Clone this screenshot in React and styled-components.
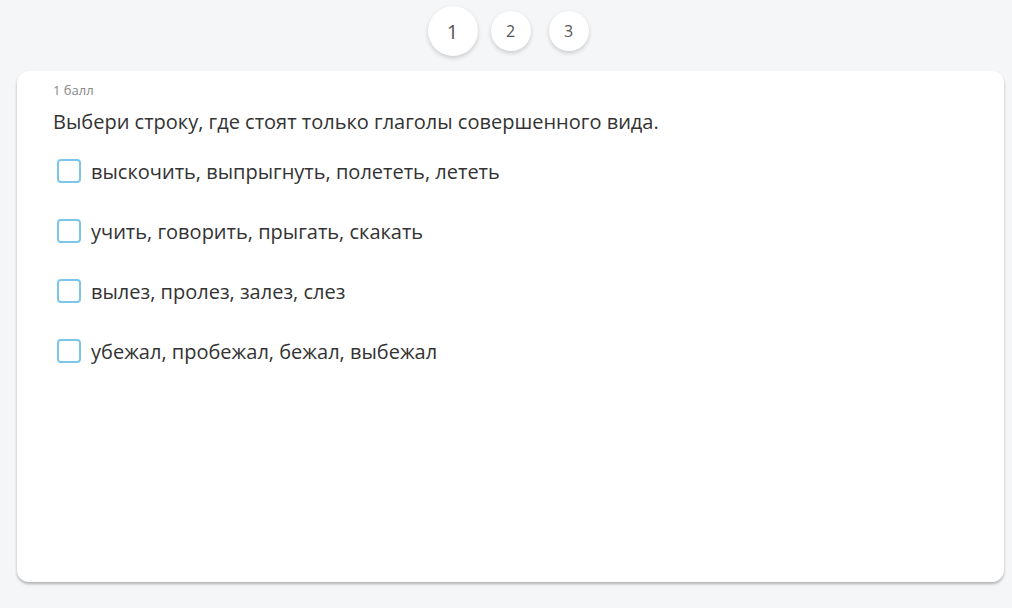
import React, { useState } from "react";
import styled, { createGlobalStyle } from "styled-components";

const Global = createGlobalStyle`
  html, body { margin: 0; padding: 0; background: #f5f6f8; }
  body { font-family: "Open Sans", "Noto Sans", sans-serif; color: #333; }
`;

const Page = styled.div`
  width: 1012px;
  height: 608px;
  box-sizing: border-box;
  padding: 6px 8px 0 17px;
  display: flex;
  flex-direction: column;
`;

const Pager = styled.div`
  display: flex;
  justify-content: center;
  align-items: center;
  height: 50px;
  margin-bottom: 15px;
`;

const Slot = styled.div`
  width: 58px;
  display: flex;
  justify-content: center;
`;

const PageBtn = styled.button`
  width: ${(p) => (p.$active ? 50 : 40)}px;
  height: ${(p) => (p.$active ? 50 : 40)}px;
  border-radius: 50%;
  border: none;
  background: #fff;
  box-shadow: 0 2px 4px rgba(0, 0, 0, 0.18);
  font-family: "Open Sans", sans-serif;
  font-size: ${(p) => (p.$active ? 20 : 16)}px;
  color: #555;
  padding: 0;
  display: flex;
  align-items: center;
  justify-content: center;
  cursor: pointer;
`;

const Card = styled.div`
  height: 511px;
  background: #fff;
  border-radius: 12px;
  box-shadow: 0 2px 3px rgba(0, 0, 0, 0.28);
  padding: 11px 36px 0 36px;
  box-sizing: border-box;
`;

const Points = styled.div`
  font-size: 13px;
  color: #888;
  line-height: 17px;
`;

const Question = styled.div`
  font-size: 20px;
  line-height: 27px;
  color: #333;
  margin-top: 9px;
`;

const Options = styled.div`
  display: flex;
  flex-direction: column;
  gap: 32px;
  margin-top: 22px;
`;

const Option = styled.label`
  display: flex;
  align-items: center;
  gap: 10px;
  height: 28px;
  font-size: 20px;
  color: #333;
  cursor: pointer;
  padding-left: 4px;
`;

const Box = styled.span`
  width: 24px;
  height: 24px;
  box-sizing: border-box;
  border: 2px solid ${(p) => (p.$checked ? "#3fa9dd" : "#7cc6ea")};
  background: ${(p) => (p.$checked ? "#3fa9dd" : "#fff")};
  border-radius: 4px;
  flex-shrink: 0;
`;

const options = [
  "выскочить, выпрыгнуть, полететь, лететь",
  "учить, говорить, прыгать, скакать",
  "вылез, пролез, залез, слез",
  "убежал, пробежал, бежал, выбежал",
];

export default function App() {
  const [checked, setChecked] = useState({});
  return (
    <>
      <Global />
      <Page>
        <Pager>
          {[1, 2, 3].map((n) => (
            <Slot key={n}>
              <PageBtn $active={n === 1}>{n}</PageBtn>
            </Slot>
          ))}
        </Pager>
        <Card>
          <Points>1 балл</Points>
          <Question>Выбери строку, где стоят только глаголы совершенного вида.</Question>
          <Options>
            {options.map((o, i) => (
              <Option key={i} onClick={() => setChecked({ ...checked, [i]: !checked[i] })}>
                <Box $checked={!!checked[i]} />
                {o}
              </Option>
            ))}
          </Options>
        </Card>
      </Page>
    </>
  );
}
